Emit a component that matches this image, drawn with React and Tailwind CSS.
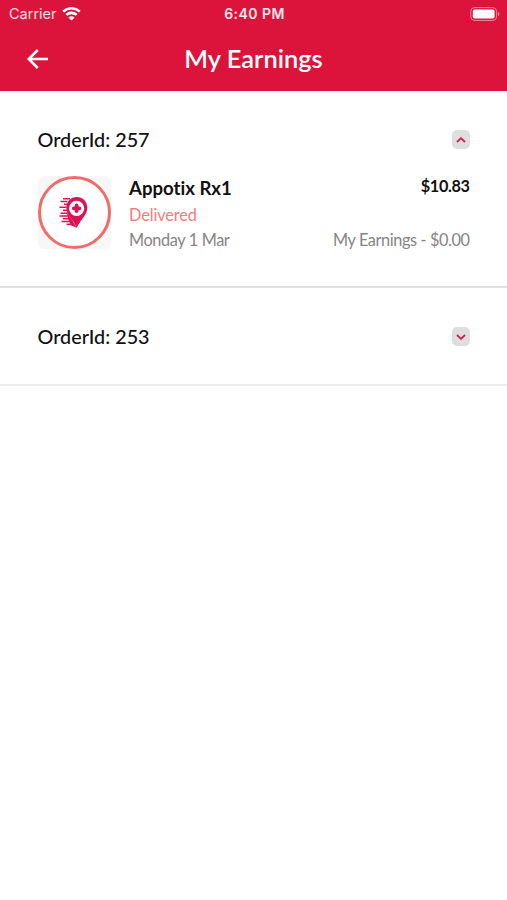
import { useState } from "react";

// Orders shown in the earnings list
const ORDERS = [
  {
    id: 257,
    store: "Appotix Rx1",
    status: "Delivered",
    date: "Monday 1 Mar",
    total: "$10.83",
    earnings: "$0.00",
  },
  {
    id: 253,
    store: "Appotix Rx1",
    status: "Delivered",
    date: "Monday 1 Mar",
    total: "$10.83",
    earnings: "$0.00",
  },
];

const StatusBar = () => (
  <div className="grid h-7 grid-cols-3 items-center pl-[9px] pr-[7px] font-['Inter',sans-serif] text-white">
    <div className="flex items-center gap-[5px]">
      <span className="text-[14.5px] leading-none text-white/85">Carrier</span>
      <svg width="19" height="14" viewBox="0 0 19 14" fill="none">
        <path
          d="M1.2 4.7C5.8.1 13.2.1 17.8 4.7M4.3 7.9c3-2.7 7.4-2.7 10.4 0"
          stroke="currentColor"
          strokeWidth="2.6"
        />
        <path
          d="M9.5 13.4 6.4 10.4c1.7-1.6 4.5-1.6 6.2 0L9.5 13.4Z"
          fill="currentColor"
        />
      </svg>
    </div>
    <span className="text-center text-[14px] font-semibold leading-none tracking-[0.45px] text-white/90">
      6:40 PM
    </span>
    <svg
      className="justify-self-end"
      width="30"
      height="14"
      viewBox="0 0 30 14"
      fill="none"
    >
      <rect
        x="0.8"
        y="0.6"
        width="25.8"
        height="12.8"
        rx="3.8"
        stroke="white"
        strokeOpacity="0.5"
      />
      <rect x="2.8" y="2.5" width="21.8" height="9" rx="2" fill="white" />
      <path d="M28 4.8c2 .8 2 3.6 0 4.4V4.8Z" fill="white" fillOpacity="0.5" />
    </svg>
  </div>
);

const StoreLogo = () => (
  <div className="size-[73px] rounded-md bg-[#f7f7f7]">
    <svg width="73" height="73" viewBox="0 0 73 73" fill="none">
      <circle cx="36.5" cy="36.5" r="35" fill="white" stroke="#f46a6a" strokeWidth="3" />
      {/* Speed lines */}
      <path
        d="M25 22.8h7M22.5 25.5h7M26 28.2h3M21.5 31.2h7M25 34.2h4M22.5 37.2h7M21.5 40h10M25 42.8h8M23.5 45.5h11M28.5 48.2h7"
        stroke="#dc1456"
        strokeWidth="1.6"
      />
      {/* Map pin */}
      <path
        d="M38.8 21c-6 0-10.5 4.7-10.5 10.8 0 7.2 6.5 11.5 10.5 20 4-8.5 10.5-12.8 10.5-20C49.3 25.7 44.8 21 38.8 21Z"
        fill="#dc1456"
      />
      <path d="M28.8 36 38.8 51.8 33 49.5l-3-7Z" fill="#dc1456" />
      <circle cx="38.6" cy="32.3" r="7.6" fill="white" />
      <path
        d="M38.6 29.5v5.6M35.8 32.3h5.6"
        stroke="#dc1456"
        strokeWidth="3.8"
        strokeLinecap="round"
      />
    </svg>
  </div>
);

const OrderItem = ({ order, isOpen, onToggle }) => (
  <section
    className={
      isOpen
        ? "h-[197px] border-b-2 border-[#e0e0e0] px-[37.5px]"
        : "h-[98px] border-b-2 border-[#ededed] px-[37.5px]"
    }
  >
    <button
      className="flex h-[97px] w-full items-center justify-between"
      onClick={onToggle}
    >
      <span className="text-[19.8px] font-medium leading-none text-[#111]">
        OrderId: {order.id}
      </span>
      <span className="flex h-[19px] w-[18px] items-center justify-center rounded-[5px] bg-[#dedede]">
        <svg width="10" height="6" viewBox="0 0 10 6" fill="none">
          <path
            d={isOpen ? "m1 5 4-3.8L9 5" : "m1 1 4 3.8L9 1"}
            stroke="#d81b4f"
            strokeWidth="1.8"
          />
        </svg>
      </span>
    </button>
    {isOpen && (
      <div className="-mt-3 flex">
        <StoreLogo />
        <div className="ml-[18.5px] flex flex-1 justify-between">
          <div className="flex flex-col">
            <span className="text-[18.6px] font-bold leading-6 text-[#111] [font-variant-ligatures:none]">
              {order.store}
            </span>
            <span className="mt-[2px] text-[16.3px] leading-[25px] tracking-[-0.1px] text-[#f77b7b]">
              {order.status}
            </span>
            <span className="text-[16.3px] leading-[26px] tracking-[-0.37px] text-[#858585]">
              {order.date}
            </span>
          </div>
          <div className="flex flex-col items-end">
            <span className="text-[16.3px] font-bold leading-5 tracking-[-0.4px] text-[#111]">
              {order.total}
            </span>
            <span className="mt-[31px] text-[16.3px] leading-[26px] tracking-[-0.4px] text-[#858585]">
              My Earnings - {order.earnings}
            </span>
          </div>
        </div>
      </div>
    )}
  </section>
);

const App = () => {
  const [openId, setOpenId] = useState(257); // Expanded order

  return (
    <div className="min-h-screen bg-white font-['Lato',sans-serif]">
      <header className="h-[91px] bg-[#dc143c]">
        <StatusBar />
        <div className="grid h-[61px] grid-cols-[1fr_auto_1fr] items-center text-white">
          <button className="ml-[27px] w-fit">
            <svg width="21" height="20" viewBox="0 0 21 20" fill="none">
              <path
                d="M10.8 1 1.7 10l9.1 9M1.7 10H21"
                stroke="currentColor"
                strokeWidth="2.5"
              />
            </svg>
          </button>
          <h1 className="text-[25.4px] font-semibold leading-none">
            My Earnings
          </h1>
        </div>
      </header>
      <main>
        {ORDERS.map((order) => (
          <OrderItem
            key={order.id}
            order={order}
            isOpen={openId === order.id}
            onToggle={() => setOpenId(openId === order.id ? null : order.id)}
          />
        ))}
      </main>
    </div>
  );
};

export default App;
